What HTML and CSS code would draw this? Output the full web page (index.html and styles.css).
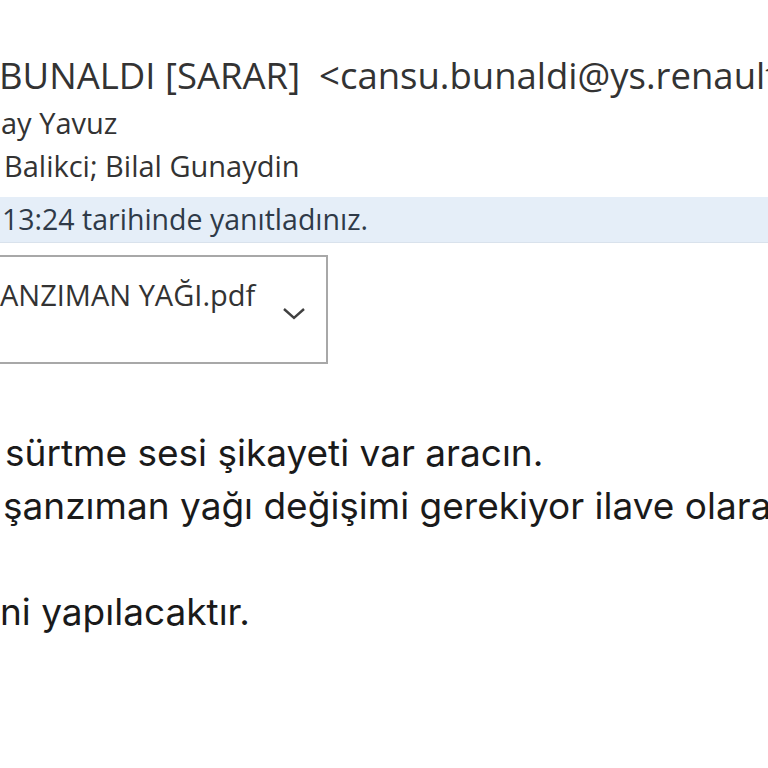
FILE: index.html
```html
<html>

<head>
    <title>Mesaj</title>
    <link rel="stylesheet" href="styles.css">
</head>

<body>
    <div id="mail">
        <div id="header">
            <div class="from">BUNALDI [SARAR]&nbsp; &lt;cansu.bunaldi@ys.renault</div>
            <div class="recipients">ay Yavuz</div>
            <div class="recipients cc">Balikci; Bilal Gunaydin</div>
        </div>

        <div id="info-bar">13:24 tarihinde yanıtladınız.</div>

        <div id="attachments">
            <div class="attachment">
                <span class="att-name">ANZIMAN YAĞI.pdf</span>
                <svg class="chevron" width="24" height="16" viewBox="0 0 24 16">
                    <path d="M2 4 L12 13 L22 4" fill="none" stroke="#404040" stroke-width="2.4" />
                </svg>
            </div>
        </div>

        <div id="message">
            <p class="first">sürtme sesi şikayeti var aracın.</p>
            <p>şanzıman yağı değişimi gerekiyor ilave olara</p>
            <p>&nbsp;</p>
            <p class="cut">ni yapılacaktır.</p>
        </div>
    </div>
</body>

</html>
```

FILE: styles.css
```css
body {
    margin: 0;
    background-color: #ffffff;
    overflow: hidden;
    white-space: nowrap;
}

#mail {
    padding-top: 51px;
}

#header {
    font-family: "Open Sans", "Noto Sans", sans-serif;
    color: #333333;
}

.from {
    font-size: 36.5px;
    line-height: 48px;
    height: 50px;
    margin-left: -1px;
}

.recipients {
    font-size: 29px;
    line-height: 43px;
    height: 43px;
    margin-left: 1px;
}

.cc {
    margin-left: 4px;
}

#info-bar {
    margin-top: 10px;
    height: 45px;
    line-height: 45px;
    background-color: #e5eef8;
    border-bottom: 1px solid #d9e2ec;
    font-family: "Open Sans", "Noto Sans", sans-serif;
    font-size: 28.5px;
    color: #2f3a48;
    padding-left: 2px;
}

#attachments {
    margin-top: 12px;
}

.attachment {
    display: flex;
    align-items: center;
    width: 326px;
    height: 105px;
    margin-left: -8px;
    border: 2px solid #a8a8a8;
    padding-left: 6px;
    box-sizing: content-box;
}

.att-name {
    flex-grow: 1;
    font-family: "Open Sans", "Noto Sans", sans-serif;
    font-size: 29px;
    color: #333333;
    margin-top: -30px;
}

.chevron {
    margin-right: 20px;
    margin-top: 6px;
}

#message {
    margin-top: 62px;
    font-family: Inter, "Noto Sans", sans-serif;
    font-size: 37px;
    color: #1a1a1a;
}

#message p {
    margin: 0;
    line-height: 53px;
    height: 53px;
    padding-left: 3px;
}

#message p.first {
    padding-left: 5px;
}

#message p.cut {
    padding-left: 0;
}
```
